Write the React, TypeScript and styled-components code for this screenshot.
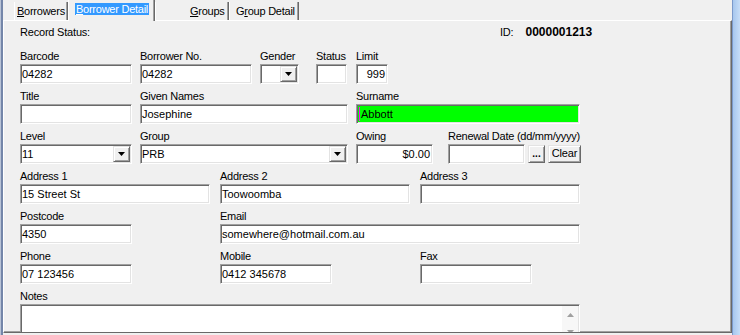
import React from "react";
import styled, { createGlobalStyle, css } from "styled-components";

const GlobalStyle = createGlobalStyle`
  html, body {
    margin: 0;
    padding: 0;
    background: #f0f0f0;
  }
  body {
    font-family: "Liberation Sans", Arial, sans-serif;
    font-size: 11px;
    color: #000;
  }
`;

const raised = css`
  box-sizing: border-box;
  background: #f0f0f0;
  border: 1px solid;
  border-color: #e3e3e3 #696969 #696969 #e3e3e3;
  box-shadow: inset 1px 1px 0 #fff, inset -1px -1px 0 #a0a0a0;
`;

const Window = styled.div`
  display: flex;
  width: 740px;
  height: 335px;
  overflow: hidden;
  background: #f0f0f0;
`;

const LeftEdge = styled.div`
  flex: none;
  width: 3px;
  background: linear-gradient(to right, #b9c3d6 0 1px, #7486a9 1px);
`;

const RightEdge = styled.div`
  flex: none;
  width: 8px;
  background: linear-gradient(to right, #7b9acb 0 1px, #a7c7ee 1px, #c6ddf7);
`;

const Main = styled.div`
  flex: 1;
  min-width: 0;
  display: flex;
  flex-direction: column;
  padding-bottom: 2px;
`;

const TabStrip = styled.div`
  flex: none;
  height: 20px;
  display: flex;
  align-items: flex-end;
  padding-left: 11px;
  position: relative;
  z-index: 1;
  letter-spacing: -0.25px;
`;

const Tab = styled.div<{ $w: number; $pl: number; $active?: boolean }>`
  box-sizing: border-box;
  width: ${(p) => p.$w}px;
  height: ${(p) => (p.$active ? 21 : 18)}px;
  margin-bottom: ${(p) => (p.$active ? -1 : 0)}px;
  padding-left: ${(p) => p.$pl}px;
  padding-top: 3px;
  background: #f0f0f0;
  border-left: 1px solid #fff;
  border-right: 1px solid #696969;
  box-shadow: inset -1px 0 0 #a0a0a0;
  line-height: 13px;
  white-space: nowrap;
`;

const TabFocus = styled.span`
  display: inline-block;
  line-height: 12px;
  padding: 0 1px;
  background: #3399ff;
  color: #fff;
`;

const Panel = styled.div`
  flex: 1;
  min-height: 0;
  overflow: hidden;
  border-top: 1px solid #fff;
  border-left: 1px solid #fff;
  border-right: 1px solid #696969;
  border-bottom: 1px solid #696969;
  box-shadow: inset -1px -1px 0 #a0a0a0;
  padding: 5px 0 0 16px;
`;

const StatusLine = styled.div`
  display: grid;
  grid-template-columns: 480px auto;
  height: 13px;
  line-height: 13px;
  white-space: nowrap;
  letter-spacing: -0.2px;
`;

const IdGroup = styled.div`
  display: flex;
  align-items: baseline;
  gap: 12px;
`;

const IdValue = styled.span`
  font-weight: bold;
  font-size: 12px;
  letter-spacing: 0;
`;

const Form = styled.div`
  display: flex;
  flex-direction: column;
  margin-top: 5px;
`;

const Row = styled.div`
  display: flex;
  align-items: flex-start;
`;

const Field = styled.div<{ $w: number; $ml?: number }>`
  flex: none;
  width: ${(p) => p.$w}px;
  margin-left: ${(p) => p.$ml ?? 0}px;
  display: flex;
  flex-direction: column;
`;

const Label = styled.div`
  box-sizing: border-box;
  height: 20px;
  display: flex;
  align-items: flex-end;
  padding-bottom: 1px;
  line-height: 13px;
  white-space: nowrap;
  letter-spacing: -0.25px;
`;

const TextBox = styled.div<{ $right?: boolean; $bg?: string; $h?: number }>`
  box-sizing: border-box;
  width: 100%;
  height: ${(p) => p.$h ?? 20}px;
  background: ${(p) => p.$bg ?? "#fff"};
  border: 1px solid;
  border-color: #a0a0a0 #fff #fff #a0a0a0;
  box-shadow: inset 1px 1px 0 #696969, inset -1px -1px 0 #e3e3e3;
  padding: 0 2px 0 1px;
  text-align: ${(p) => (p.$right ? "right" : "left")};
  line-height: 18px;
  white-space: nowrap;
  overflow: hidden;
`;

const Combo = styled(TextBox)`
  display: flex;
  align-items: flex-start;
  padding-right: 0;
`;

const ComboValue = styled.span`
  flex: 1;
  min-width: 0;
`;

const DropButton = styled.div`
  ${raised};
  flex: none;
  width: 17px;
  height: 16px;
  margin: 1px 1px 1px 0;
  display: flex;
  align-items: center;
  justify-content: center;
`;

const Caret = styled.span`
  display: inline-block;
  width: 1px;
  height: 14px;
  margin: 0 1px 0 1px;
  vertical-align: -3px;
  background: #ff00ff;
`;

const Inline = styled.div`
  display: flex;
  align-items: center;
  height: 20px;
`;

const PushButton = styled.div<{ $w: number }>`
  ${raised};
  flex: none;
  width: ${(p) => p.$w}px;
  height: 18px;
  margin-left: 3px;
  line-height: 15px;
  text-align: center;
  letter-spacing: -0.2px;
`;

const Dots = styled.span`
  font-weight: bold;
  letter-spacing: 0;
  font-size: 10px;
`;

const NotesBox = styled(TextBox)`
  display: flex;
  padding-right: 0;
`;

const ScrollBar = styled.div`
  flex: none;
  width: 16px;
  margin: 1px 1px 1px auto;
  display: flex;
  flex-direction: column;
  background: #f7f7f7;
`;

const ScrollButton = styled.div`
  flex: none;
  height: 17px;
  display: flex;
  align-items: center;
  justify-content: center;
`;

const Arrow: React.FC<{ up?: boolean; color?: string }> = ({ up, color = "#000" }) => (
  <svg width="7" height="4" viewBox="0 0 7 4">
    <path d={up ? "M0 4h7L3.5 0z" : "M0 0h7L3.5 4z"} fill={color} />
  </svg>
);

const App: React.FC = () => {
  return (
    <>
      <GlobalStyle />
      <Window>
        <LeftEdge />
        <Main>
          <TabStrip>
            <Tab $w={54} $pl={2}>
              <u>B</u>orrowers
            </Tab>
            <Tab $w={87} $pl={6} $active>
              <TabFocus>
                <u>B</u>orrower Detail
              </TabFocus>
            </Tab>
            <Tab $w={74} $pl={34}>
              <u>G</u>roups
            </Tab>
            <Tab $w={70} $pl={6}>
              G<u>r</u>oup Detail
            </Tab>
          </TabStrip>

          <Panel>
            <StatusLine>
              <span>Record Status:</span>
              <IdGroup>
                <span>ID:</span>
                <IdValue>0000001213</IdValue>
              </IdGroup>
            </StatusLine>

            <Form>
              <Row>
                <Field $w={112}>
                  <Label>Barcode</Label>
                  <TextBox>04282</TextBox>
                </Field>
                <Field $w={112} $ml={8}>
                  <Label>Borrower No.</Label>
                  <TextBox>04282</TextBox>
                </Field>
                <Field $w={39} $ml={8}>
                  <Label>Gender</Label>
                  <Combo>
                    <ComboValue />
                    <DropButton>
                      <Arrow />
                    </DropButton>
                  </Combo>
                </Field>
                <Field $w={31} $ml={17}>
                  <Label>Status</Label>
                  <TextBox />
                </Field>
                <Field $w={32} $ml={9}>
                  <Label>Limit</Label>
                  <TextBox $right>999</TextBox>
                </Field>
              </Row>

              <Row>
                <Field $w={112}>
                  <Label>Title</Label>
                  <TextBox />
                </Field>
                <Field $w={208} $ml={8}>
                  <Label>Given Names</Label>
                  <TextBox>Josephine</TextBox>
                </Field>
                <Field $w={224} $ml={8}>
                  <Label>Surname</Label>
                  <TextBox $bg="#00ff00">
                    <Caret />
                    Abbott
                  </TextBox>
                </Field>
              </Row>

              <Row>
                <Field $w={112}>
                  <Label>Level</Label>
                  <Combo>
                    <ComboValue>11</ComboValue>
                    <DropButton>
                      <Arrow />
                    </DropButton>
                  </Combo>
                </Field>
                <Field $w={208} $ml={8}>
                  <Label>Group</Label>
                  <Combo>
                    <ComboValue>PRB</ComboValue>
                    <DropButton>
                      <Arrow />
                    </DropButton>
                  </Combo>
                </Field>
                <Field $w={77} $ml={8}>
                  <Label>Owing</Label>
                  <TextBox $right>$0.00</TextBox>
                </Field>
                <Field $w={133} $ml={15}>
                  <Label>Renewal Date (dd/mm/yyyy)</Label>
                  <Inline>
                    <TextBox style={{ width: 77, flex: "none" }} />
                    <PushButton $w={17}>
                      <Dots>...</Dots>
                    </PushButton>
                    <PushButton $w={33}>Clear</PushButton>
                  </Inline>
                </Field>
              </Row>

              <Row>
                <Field $w={190}>
                  <Label>Address 1</Label>
                  <TextBox>15 Street St</TextBox>
                </Field>
                <Field $w={190} $ml={10}>
                  <Label>Address 2</Label>
                  <TextBox>Toowoomba</TextBox>
                </Field>
                <Field $w={160} $ml={10}>
                  <Label>Address 3</Label>
                  <TextBox />
                </Field>
              </Row>

              <Row>
                <Field $w={112}>
                  <Label>Postcode</Label>
                  <TextBox>4350</TextBox>
                </Field>
                <Field $w={360} $ml={88}>
                  <Label>Email</Label>
                  <TextBox>somewhere@hotmail.com.au</TextBox>
                </Field>
              </Row>

              <Row>
                <Field $w={112}>
                  <Label>Phone</Label>
                  <TextBox>07 123456</TextBox>
                </Field>
                <Field $w={112} $ml={88}>
                  <Label>Mobile</Label>
                  <TextBox>0412 345678</TextBox>
                </Field>
                <Field $w={112} $ml={88}>
                  <Label>Fax</Label>
                  <TextBox />
                </Field>
              </Row>

              <Row>
                <Field $w={560}>
                  <Label>Notes</Label>
                  <NotesBox $h={38}>
                    <ScrollBar>
                      <ScrollButton>
                        <Arrow up color="#a0a0a0" />
                      </ScrollButton>
                      <ScrollButton>
                        <Arrow color="#a0a0a0" />
                      </ScrollButton>
                    </ScrollBar>
                  </NotesBox>
                </Field>
              </Row>
            </Form>
          </Panel>
        </Main>
        <RightEdge />
      </Window>
    </>
  );
};

export default App;
